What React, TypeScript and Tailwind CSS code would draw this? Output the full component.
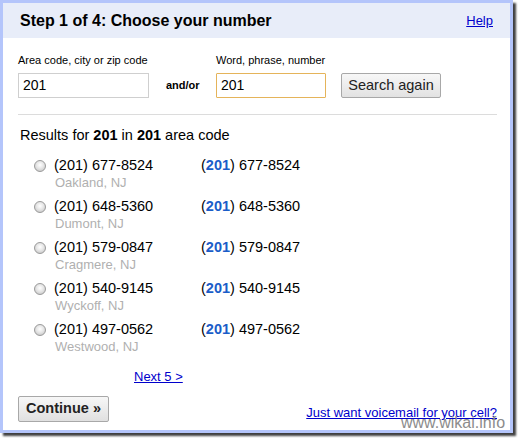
const numbers = [
  { area: '201', rest: '677-8524', place: 'Oakland, NJ' },
  { area: '201', rest: '648-5360', place: 'Dumont, NJ' },
  { area: '201', rest: '579-0847', place: 'Cragmere, NJ' },
  { area: '201', rest: '540-9145', place: 'Wyckoff, NJ' },
  { area: '201', rest: '497-0562', place: 'Westwood, NJ' },
];

function Radio() {
  return (
    <span className="w-[12px] h-[12px] rounded-full border border-[#9a9a9a] bg-[radial-gradient(circle_at_50%_40%,#ffffff_0%,#e6e6e6_45%,#bdbdbd_100%)] shrink-0" />
  );
}

export default function App() {
  return (
    <div className="w-[518px] h-[438px] bg-white relative font-['Liberation_Sans',Arial,sans-serif] text-black">
      <div className="w-[513px] h-[433px] border-[3px] border-[#b4c5fb] shadow-[3px_3px_2px_rgba(0,0,0,0.75)] bg-white flex flex-col">
        {/* Header */}
        <div className="h-[35px] bg-[#e8edf9] flex items-center justify-between pl-[17px] pr-[17px] shrink-0">
          <h1 className="text-[16px] font-bold leading-none">Step 1 of 4: Choose your number</h1>
          <a href="#" className="text-[13px] text-[#0000cc] underline">Help</a>
        </div>

        <div className="px-[15px] flex flex-col">
          {/* Search form */}
          <div className="flex items-end mt-[16px]">
            <div className="flex flex-col">
              <label className="text-[11px] leading-[13px] mb-[6px]">Area code, city or zip code</label>
              <div className="w-[131px] h-[25px] border border-[#cfcfcf] flex items-center px-[4px] text-[14px]">201</div>
            </div>
            <span className="text-[11px] font-bold ml-[17px] mb-[5px] w-[33px]">and/or</span>
            <div className="flex flex-col ml-[17px]">
              <label className="text-[11px] leading-[13px] mb-[6px]">Word, phrase, number</label>
              <div className="w-[110px] h-[25px] border border-[#e5b45a] rounded-[1px] flex items-center px-[4px] text-[14px]">201</div>
            </div>
            <button className="ml-[15px] w-[100px] h-[25px] border border-[#a8a8a8] rounded-[2px] bg-[linear-gradient(#f7f7f7,#e2e2e2)] text-[14.5px] text-[#222] flex items-center justify-center">
              Search again
            </button>
          </div>

          <div className="h-px bg-[#dcdcdc] mt-[16px] mr-[-2px]" />

          <p className="text-[14.5px] leading-[16px] mt-[12px] pl-[2px]">
            Results for <b>201</b> in <b>201</b> area code
          </p>

          {/* Results */}
          <div className="flex flex-col mt-[14px]">
            {numbers.map((n) => (
              <div key={n.rest} className="h-[41px] flex items-start">
                <div className="w-[36px] h-[17px] flex items-center justify-end pr-[8px]">
                  <Radio />
                </div>
                <div className="w-[147px] flex flex-col">
                  <span className="text-[14.5px] leading-[17px]">({n.area}) {n.rest}</span>
                  <span className="text-[13px] leading-[17px] text-[#b0b0b0] pl-[1px]">{n.place}</span>
                </div>
                <span className="text-[14.5px] leading-[17px]">
                  (<b className="text-[#1a5dc8]">{n.area}</b>) {n.rest}
                </span>
              </div>
            ))}
          </div>

          <a href="#" className="text-[13px] leading-[15px] text-[#0000cc] underline ml-[116px] mt-[7px] self-start">
            Next 5 &gt;
          </a>

          {/* Footer */}
          <div className="flex items-end justify-between mt-[12px]">
            <button className="w-[91px] h-[26px] border border-[#a8a8a8] rounded-[2px] bg-[linear-gradient(#f7f7f7,#e0e0e0)] text-[14.5px] font-bold text-[#222] flex items-center justify-center">
              Continue »
            </button>
            <a href="#" className="text-[13px] leading-[15px] text-[#0000cc] underline mb-[2px] mr-[-2px]">
              Just want voicemail for your cell?
            </a>
          </div>
        </div>
      </div>

      <span className="absolute left-[401px] top-[414px] text-[16px] leading-[18px] text-[#8c8c8c]">www.wikai.info</span>
    </div>
  );
}
